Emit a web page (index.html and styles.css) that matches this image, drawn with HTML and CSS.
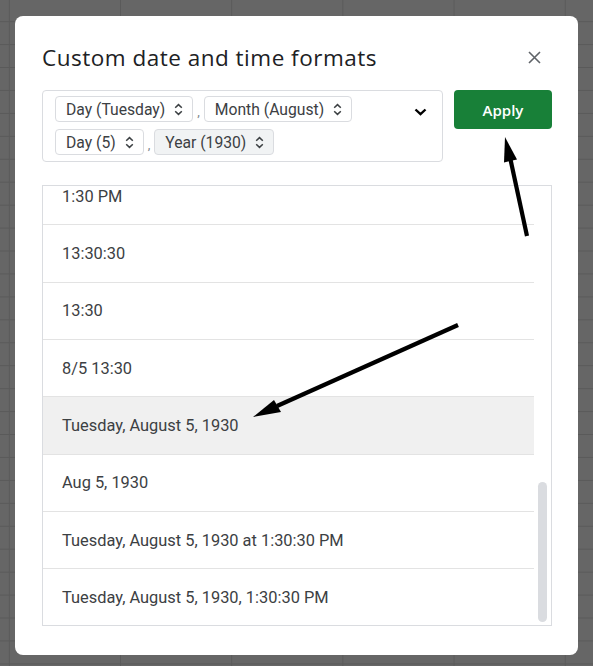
FILE: index.html
```html
<!DOCTYPE html>
<html lang="en">
<head>
<meta charset="utf-8">
<title>Custom date and time formats</title>
<link rel="stylesheet" href="styles.css">
</head>
<body>
<div class="dialog">
  <div class="header">
    <h1 class="title">Custom date and time formats</h1>
    <svg class="close" width="13" height="13" viewBox="0 0 13 13"><path d="M1 1 L12 12 M12 1 L1 12" stroke="#5f6368" stroke-width="1.6" fill="none"/></svg>
  </div>
  <div class="controls">
    <div class="format-box">
      <div class="chips">
        <div class="chip-row">
          <span class="chip">Day (Tuesday)<svg class="updown" width="9" height="13" viewBox="0 0 9 13"><path d="M1.2 4.8 L4.5 1.6 L7.8 4.8 M1.2 8.2 L4.5 11.4 L7.8 8.2" stroke="#3c4043" stroke-width="1.5" fill="none"/></svg></span>
          <span class="comma">,</span>
          <span class="chip">Month (August)<svg class="updown" width="9" height="13" viewBox="0 0 9 13"><path d="M1.2 4.8 L4.5 1.6 L7.8 4.8 M1.2 8.2 L4.5 11.4 L7.8 8.2" stroke="#3c4043" stroke-width="1.5" fill="none"/></svg></span>
        </div>
        <div class="chip-row">
          <span class="chip">Day (5)<svg class="updown" width="9" height="13" viewBox="0 0 9 13"><path d="M1.2 4.8 L4.5 1.6 L7.8 4.8 M1.2 8.2 L4.5 11.4 L7.8 8.2" stroke="#3c4043" stroke-width="1.5" fill="none"/></svg></span>
          <span class="comma">,</span>
          <span class="chip chip-active">Year (1930)<svg class="updown" width="9" height="13" viewBox="0 0 9 13"><path d="M1.2 4.8 L4.5 1.6 L7.8 4.8 M1.2 8.2 L4.5 11.4 L7.8 8.2" stroke="#3c4043" stroke-width="1.5" fill="none"/></svg></span>
        </div>
      </div>
      <svg class="dropdown" width="13" height="8" viewBox="0 0 13 8"><path d="M1.5 1.5 L6.5 6.2 L11.5 1.5" stroke="#000" stroke-width="2.4" fill="none"/></svg>
    </div>
    <button class="apply">Apply</button>
  </div>
  <div class="list">
    <div class="rows">
      <div class="rows-inner">
        <div class="row">1:30 PM</div>
        <div class="row">13:30:30</div>
        <div class="row">13:30</div>
        <div class="row">8/5 13:30</div>
        <div class="row row-hover">Tuesday, August 5, 1930</div>
        <div class="row">Aug 5, 1930</div>
        <div class="row">Tuesday, August 5, 1930 at 1:30:30 PM</div>
        <div class="row row-last">Tuesday, August 5, 1930, 1:30:30 PM</div>
      </div>
    </div>
    <div class="track"><div class="thumb"></div></div>
  </div>
</div>
<svg class="annotations" width="593" height="666" viewBox="0 0 593 666">
  <line x1="527" y1="236" x2="510.6" y2="160" stroke="#000" stroke-width="4.2"/>
  <polygon points="505,137 517,159.5 504,162.5" fill="#000"/>
  <line x1="458" y1="325" x2="277" y2="406" stroke="#000" stroke-width="4.2"/>
  <polygon points="253,417 274,400 281,412" fill="#000"/>
</svg>
</body>
</html>
```
FILE: styles.css
```css
html, body {
  margin: 0;
  padding: 0;
}
body {
  width: 593px;
  height: 666px;
  overflow: hidden;
  position: relative;
  font-family: Roboto, "Liberation Sans", sans-serif;
  background-color: #666666;
  background-image:
    linear-gradient(to right, #5a5a5a 1px, transparent 1px),
    linear-gradient(to bottom, #5a5a5a 1px, transparent 1px);
  background-size: 111.2px 22.95px;
  background-position: 8.8px 21.15px;
  padding-top: 16px;
  padding-left: 15px;
  box-sizing: border-box;
}
.dialog {
  width: 563px;
  height: 639px;
  background: #fff;
  border-radius: 8px;
  padding: 0 26px 29px 27px;
  box-sizing: border-box;
  display: flex;
  flex-direction: column;
}
.header {
  display: flex;
  align-items: center;
  justify-content: space-between;
  height: 50px;
  margin-top: 16px;
  margin-bottom: 8px;
  padding-right: 11px;
}
.title {
  margin: 0;
  font-family: "Open Sans", Roboto, sans-serif;
  font-weight: 400;
  font-size: 22.5px;
  color: #202124;
  letter-spacing: 0.5px;
}
.close {
  display: block;
}
.controls {
  display: flex;
  align-items: flex-start;
  gap: 11px;
}
.format-box {
  width: 401px;
  height: 72px;
  box-sizing: border-box;
  border: 1px solid #dadce0;
  border-radius: 4px;
  display: flex;
  align-items: flex-start;
  padding: 5px 15px 0 12px;
}
.chips {
  flex: 1;
  display: flex;
  flex-direction: column;
  gap: 7px;
}
.chip-row {
  display: flex;
  align-items: flex-end;
  gap: 4px;
}
.chip {
  display: inline-flex;
  align-items: center;
  gap: 9px;
  height: 26px;
  box-sizing: border-box;
  border: 1px solid #dadce0;
  border-radius: 4px;
  padding: 0 9px 0 10px;
  font-size: 15.7px;
  color: #3c4043;
  background: #fff;
}
.chip-active {
  background: #f1f3f4;
}
.updown {
  display: block;
}
.comma {
  font-size: 13px;
  color: #80868b;
  line-height: 16px;
  padding: 0 0 2px;
}
.dropdown {
  display: block;
  margin-top: 12px;
}
.apply {
  width: 98px;
  height: 39px;
  border: none;
  border-radius: 4px;
  background: #188038;
  color: #fff;
  font-family: "Open Sans", Roboto, sans-serif;
  font-weight: 600;
  font-size: 15px;
  padding: 0;
  cursor: pointer;
}
.list {
  margin-top: 23px;
  height: 441px;
  box-sizing: border-box;
  border: 1px solid #dadce0;
  display: flex;
}
.rows {
  flex: 1;
  overflow: hidden;
}
.rows-inner {
  margin-top: -18px;
}
.row {
  height: 57.33px;
  box-sizing: border-box;
  border-bottom: 1px solid #e3e3e3;
  display: flex;
  align-items: center;
  padding-left: 19px;
  font-size: 16.4px;
  color: #3c4043;
}
.row-hover {
  background: #f0f0f0;
}
.row-last {
  border-bottom: none;
}
.track {
  width: 17px;
  flex: none;
}
.thumb {
  margin-top: 296px;
  margin-left: 4px;
  width: 9px;
  height: 140px;
  border-radius: 5px;
  background: #dadce0;
}
.annotations {
  position: absolute;
  top: 0;
  left: 0;
  pointer-events: none;
}
```
